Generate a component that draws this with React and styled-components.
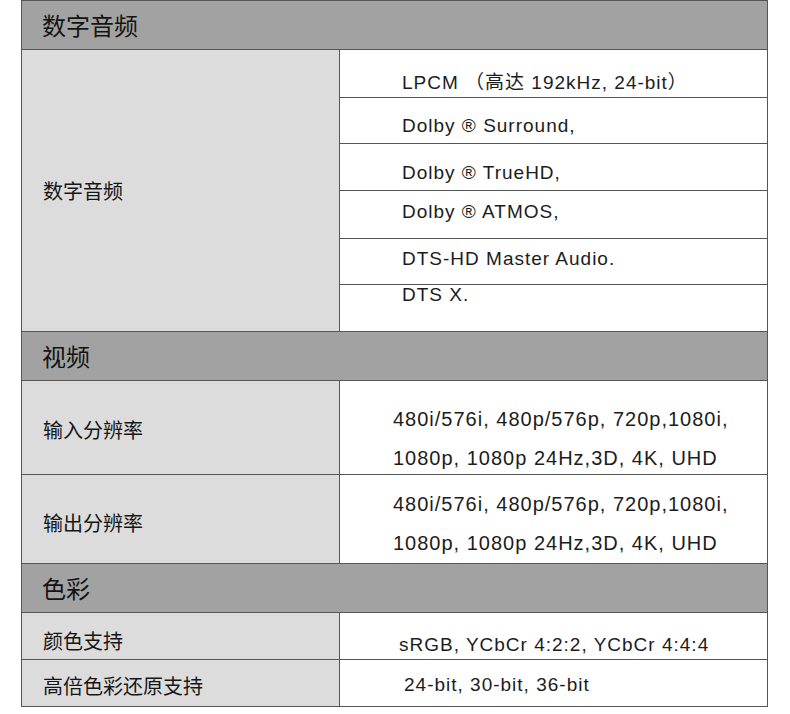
import React from "react";
import styled, { createGlobalStyle } from "styled-components";

const GlobalStyle = createGlobalStyle`
  html, body {
    margin: 0;
    padding: 0;
    background: #ffffff;
  }
  body {
    font-family: "Liberation Sans", "Noto Sans CJK SC", sans-serif;
    color: #161616;
  }
`;

const Table = styled.div`
  box-sizing: border-box;
  width: 747px;
  margin-left: 21px;
  border: 1px solid #555555;
  display: flex;
  flex-direction: column;
`;

const SectionHeader = styled.div`
  height: 48px;
  display: flex;
  align-items: center;
  padding-left: 20px;
  background: #a2a2a2;
  border-bottom: 1px solid #555555;
  font-family: "Noto Sans CJK SC", sans-serif;
  font-size: 24px;
  line-height: 1;
  color: #141414;
`;

const Group = styled.div`
  display: flex;
  border-bottom: 1px solid #555555;
  &:last-child {
    border-bottom: none;
  }
`;

const LabelCell = styled.div`
  flex: 0 0 318px;
  display: flex;
  align-items: center;
  box-sizing: border-box;
  padding-left: 21px;
  padding-top: ${(p) => p.$shift || 0}px;
  background: #dcdcdc;
  border-right: 1px solid #555555;
  font-family: "Noto Sans CJK SC", sans-serif;
  font-size: 20px;
  line-height: 1;
  color: #161616;
`;

const ValueList = styled.div`
  flex: 1;
  display: flex;
  flex-direction: column;
`;

const ValueRow = styled.div`
  box-sizing: border-box;
  height: ${(p) => p.$h}px;
  padding-top: ${(p) => p.$top}px;
  padding-left: ${(p) => p.$left}px;
  border-bottom: 1px solid #555555;
  &:last-child {
    border-bottom: none;
  }
`;

const ValueText = styled.div`
  font-size: ${(p) => p.$size || 19}px;
  line-height: ${(p) => p.$lh || 19}px;
  letter-spacing: 1px;
  white-space: nowrap;
  color: #1c1c1c;
`;

const sections = [
  {
    title: "数字音频",
    groups: [
      {
        label: "数字音频",
        rows: [
          { h: 48, top: 23, left: 62, lines: ["LPCM （高达 192kHz, 24-bit）"] },
          { h: 46, top: 18, left: 62, lines: ["Dolby ® Surround,"] },
          { h: 47, top: 19, left: 62, lines: ["Dolby ® TrueHD,"] },
          { h: 48, top: 11, left: 62, lines: ["Dolby ® ATMOS,"] },
          { h: 46, top: 10, left: 62, lines: ["DTS-HD Master Audio."] },
          { h: 46, top: 0, left: 62, lines: ["DTS X."] },
        ],
      },
    ],
  },
  {
    title: "视频",
    groups: [
      {
        label: "输入分辨率",
        shift: 4,
        rows: [
          {
            h: 93,
            top: 19,
            left: 53,
            size: 20,
            lh: 39,
            lines: [
              "480i/576i, 480p/576p, 720p,1080i,",
              "1080p, 1080p 24Hz,3D, 4K, UHD",
            ],
          },
        ],
      },
      {
        label: "输出分辨率",
        shift: 8,
        rows: [
          {
            h: 88,
            top: 10,
            left: 53,
            size: 20,
            lh: 39,
            lines: [
              "480i/576i, 480p/576p, 720p,1080i,",
              "1080p, 1080p 24Hz,3D, 4K, UHD",
            ],
          },
        ],
      },
    ],
  },
  {
    title: "色彩",
    groups: [
      {
        label: "颜色支持",
        shift: 10,
        rows: [
          { h: 46, top: 22, left: 59, lines: ["sRGB, YCbCr 4:2:2, YCbCr 4:4:4"] },
        ],
      },
      {
        label: "高倍色彩还原支持",
        shift: 6,
        rows: [{ h: 46, top: 15, left: 64, lines: ["24-bit, 30-bit, 36-bit"] }],
      },
    ],
  },
];

export default function App() {
  return (
    <>
      <GlobalStyle />
      <Table>
        {sections.map((s) => (
          <React.Fragment key={s.title}>
            <SectionHeader>{s.title}</SectionHeader>
            {s.groups.map((g) => (
              <Group key={g.label}>
                <LabelCell $shift={g.shift}>{g.label}</LabelCell>
                <ValueList>
                  {g.rows.map((r, i) => (
                    <ValueRow key={i} $h={r.h} $top={r.top} $left={r.left}>
                      {r.lines.map((t, j) => (
                        <ValueText key={j} $size={r.size} $lh={r.lh}>
                          {t}
                        </ValueText>
                      ))}
                    </ValueRow>
                  ))}
                </ValueList>
              </Group>
            ))}
          </React.Fragment>
        ))}
      </Table>
    </>
  );
}
